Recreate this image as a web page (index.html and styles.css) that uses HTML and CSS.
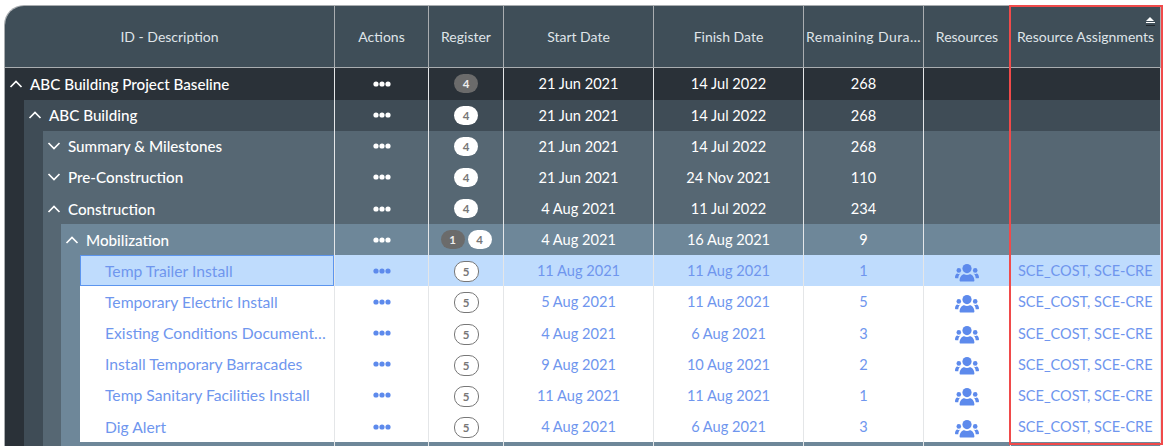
FILE: index.html
```html
<!DOCTYPE html>
<html lang="en">
<head>
    <meta charset="UTF-8">
    <meta name="viewport" content="width=device-width, initial-scale=1.0">
    <title>Schedule Grid</title>
    <link rel="stylesheet" href="styles.css">
</head>
<body>
    <svg class="defs" width="0" height="0">
        <symbol id="dots" viewBox="0 0 18 6">
            <circle cx="3" cy="3" r="2.6"/><circle cx="9" cy="3" r="2.6"/><circle cx="15" cy="3" r="2.6"/>
        </symbol>
        <symbol id="up" viewBox="0 0 14 8">
            <path d="M1.5 7 7 1.5 12.5 7" fill="none" stroke="currentColor" stroke-width="1.7"/>
        </symbol>
        <symbol id="down" viewBox="0 0 14 8">
            <path d="M1.5 1 7 6.5 12.5 1" fill="none" stroke="currentColor" stroke-width="1.7"/>
        </symbol>
        <symbol id="people" viewBox="0 0 24 18">
            <circle cx="12" cy="4.6" r="4.6"/>
            <path d="M5.6 17.5c-.6 0-1-.4-1-1 0-3.800 2.400-6.300 4.600-6.300.9.500 1.800.8 2.800.8s1.900-.3 2.800-.8c2.200 0 4.600 2.500 4.600 6.300 0 .6-.4 1-1 1z"/>
            <circle cx="3.800" cy="6.400" r="2.300"/><circle cx="20.200" cy="6.400" r="2.300"/>
            <path d="M3.300 14.300H1c-.6 0-1-.4-1-1 0-2.100 1-3.900 2.400-3.900.6.400 1.100.6 1.700.6.500 0 1-.1 1.400-.4-1.300 1-2.200 2.700-2.200 4.700zM20.700 14.300H23c.6 0 1-.4 1-1 0-2.100-1-3.900-2.400-3.900-.6.400-1.100.6-1.700.6-.5 0-1-.1-1.400-.4 1.300 1 2.200 2.700 2.200 4.700z"/>
        </symbol>
    </svg>

    <div class="grid">
        <div class="row head">
            <div class="cell">ID - Description</div>
            <div class="cell">Actions</div>
            <div class="cell">Register</div>
            <div class="cell">Start Date</div>
            <div class="cell">Finish Date</div>
            <div class="cell wide">Remaining Dura…</div>
            <div class="cell">Resources</div>
            <div class="cell sorted">Resource Assignments<span class="sort-arrow"></span></div>
        </div>

        <div class="row lvl1">
            <div class="cell desc"><svg class="chev"><use href="#up"/></svg><span class="label">ABC Building Project Baseline</span></div>
            <div class="cell"><svg class="dots"><use href="#dots"/></svg></div>
            <div class="cell"><span class="pill grey">4</span></div>
            <div class="cell">21 Jun 2021</div>
            <div class="cell">14 Jul 2022</div>
            <div class="cell">268</div>
            <div class="cell"></div>
            <div class="cell"></div>
        </div>

        <div class="row lvl2">
            <div class="cell desc"><i class="in1"></i><svg class="chev"><use href="#up"/></svg><span class="label">ABC Building</span></div>
            <div class="cell"><svg class="dots"><use href="#dots"/></svg></div>
            <div class="cell"><span class="pill">4</span></div>
            <div class="cell">21 Jun 2021</div>
            <div class="cell">14 Jul 2022</div>
            <div class="cell">268</div>
            <div class="cell"></div>
            <div class="cell"></div>
        </div>

        <div class="row lvl3">
            <div class="cell desc"><i class="in1"></i><i class="in2"></i><svg class="chev"><use href="#down"/></svg><span class="label">Summary &amp; Milestones</span></div>
            <div class="cell"><svg class="dots"><use href="#dots"/></svg></div>
            <div class="cell"><span class="pill">4</span></div>
            <div class="cell">21 Jun 2021</div>
            <div class="cell">14 Jul 2022</div>
            <div class="cell">268</div>
            <div class="cell"></div>
            <div class="cell"></div>
        </div>

        <div class="row lvl3">
            <div class="cell desc"><i class="in1"></i><i class="in2"></i><svg class="chev"><use href="#down"/></svg><span class="label">Pre-Construction</span></div>
            <div class="cell"><svg class="dots"><use href="#dots"/></svg></div>
            <div class="cell"><span class="pill">4</span></div>
            <div class="cell">21 Jun 2021</div>
            <div class="cell">24 Nov 2021</div>
            <div class="cell">110</div>
            <div class="cell"></div>
            <div class="cell"></div>
        </div>

        <div class="row lvl3">
            <div class="cell desc"><i class="in1"></i><i class="in2"></i><svg class="chev"><use href="#up"/></svg><span class="label">Construction</span></div>
            <div class="cell"><svg class="dots"><use href="#dots"/></svg></div>
            <div class="cell"><span class="pill">4</span></div>
            <div class="cell">4 Aug 2021</div>
            <div class="cell">11 Jul 2022</div>
            <div class="cell">234</div>
            <div class="cell"></div>
            <div class="cell"></div>
        </div>

        <div class="row lvl4">
            <div class="cell desc"><i class="in1"></i><i class="in2"></i><i class="in3"></i><svg class="chev"><use href="#up"/></svg><span class="label">Mobilization</span></div>
            <div class="cell"><svg class="dots"><use href="#dots"/></svg></div>
            <div class="cell"><span class="pill grey">1</span><span class="pill">4</span></div>
            <div class="cell">4 Aug 2021</div>
            <div class="cell">16 Aug 2021</div>
            <div class="cell">9</div>
            <div class="cell"></div>
            <div class="cell"></div>
        </div>

        <div class="row leaf selected">
            <div class="cell desc"><i class="in1"></i><i class="in2"></i><i class="in3"></i><i class="in4"></i><span class="name">Temp Trailer Install</span></div>
            <div class="cell"><svg class="dots"><use href="#dots"/></svg></div>
            <div class="cell"><span class="pill outline">5</span></div>
            <div class="cell">11 Aug 2021</div>
            <div class="cell">11 Aug 2021</div>
            <div class="cell">1</div>
            <div class="cell"><svg class="people"><use href="#people"/></svg></div>
            <div class="cell assign">SCE_COST, SCE-CRE</div>
        </div>

        <div class="row leaf">
            <div class="cell desc"><i class="in1"></i><i class="in2"></i><i class="in3"></i><i class="in4"></i><span class="name">Temporary Electric Install</span></div>
            <div class="cell"><svg class="dots"><use href="#dots"/></svg></div>
            <div class="cell"><span class="pill outline">5</span></div>
            <div class="cell">5 Aug 2021</div>
            <div class="cell">11 Aug 2021</div>
            <div class="cell">5</div>
            <div class="cell"><svg class="people"><use href="#people"/></svg></div>
            <div class="cell assign">SCE_COST, SCE-CRE</div>
        </div>

        <div class="row leaf">
            <div class="cell desc"><i class="in1"></i><i class="in2"></i><i class="in3"></i><i class="in4"></i><span class="name">Existing Conditions Document…</span></div>
            <div class="cell"><svg class="dots"><use href="#dots"/></svg></div>
            <div class="cell"><span class="pill outline">5</span></div>
            <div class="cell">4 Aug 2021</div>
            <div class="cell">6 Aug 2021</div>
            <div class="cell">3</div>
            <div class="cell"><svg class="people"><use href="#people"/></svg></div>
            <div class="cell assign">SCE_COST, SCE-CRE</div>
        </div>

        <div class="row leaf">
            <div class="cell desc"><i class="in1"></i><i class="in2"></i><i class="in3"></i><i class="in4"></i><span class="name">Install Temporary Barracades</span></div>
            <div class="cell"><svg class="dots"><use href="#dots"/></svg></div>
            <div class="cell"><span class="pill outline">5</span></div>
            <div class="cell">9 Aug 2021</div>
            <div class="cell">10 Aug 2021</div>
            <div class="cell">2</div>
            <div class="cell"><svg class="people"><use href="#people"/></svg></div>
            <div class="cell assign">SCE_COST, SCE-CRE</div>
        </div>

        <div class="row leaf">
            <div class="cell desc"><i class="in1"></i><i class="in2"></i><i class="in3"></i><i class="in4"></i><span class="name">Temp Sanitary Facilities Install</span></div>
            <div class="cell"><svg class="dots"><use href="#dots"/></svg></div>
            <div class="cell"><span class="pill outline">5</span></div>
            <div class="cell">11 Aug 2021</div>
            <div class="cell">11 Aug 2021</div>
            <div class="cell">1</div>
            <div class="cell"><svg class="people"><use href="#people"/></svg></div>
            <div class="cell assign">SCE_COST, SCE-CRE</div>
        </div>

        <div class="row leaf">
            <div class="cell desc"><i class="in1"></i><i class="in2"></i><i class="in3"></i><i class="in4"></i><span class="name">Dig Alert</span></div>
            <div class="cell"><svg class="dots"><use href="#dots"/></svg></div>
            <div class="cell"><span class="pill outline">5</span></div>
            <div class="cell">4 Aug 2021</div>
            <div class="cell">6 Aug 2021</div>
            <div class="cell">3</div>
            <div class="cell"><svg class="people"><use href="#people"/></svg></div>
            <div class="cell assign">SCE_COST, SCE-CRE</div>
        </div>

        <div class="row tail">
            <div class="cell desc"><i class="in1"></i><i class="in2"></i><i class="in3"></i></div>
            <div class="cell"></div>
            <div class="cell"></div>
            <div class="cell"></div>
            <div class="cell"></div>
            <div class="cell"></div>
            <div class="cell"></div>
            <div class="cell"></div>
        </div>
    </div>

    <div class="highlight"></div>
</body>
</html>
```

FILE: styles.css
```css
html, body {
    height: 100%;
    overflow: hidden;
}
body {
    margin: 0;
    padding: 5px 0 0 4px;
    box-sizing: border-box;
    position: relative;
    background: #fff;
    font-family: Lato, "Noto Sans", Arial, sans-serif;
    font-size: 14.6px;
}
.defs {
    position: absolute;
}
.grid {
    width: 1157px;
    border-top-left-radius: 20px;
    overflow: hidden;
    border-left: 1px solid #a9adb0;
    border-top: 1px solid #a9adb0;
    box-sizing: border-box;
}
.row {
    display: grid;
    grid-template-columns: 330px 94px 75px 150px 150px 120px 87px 150px;
    height: 31.15px;
    color: #fff;
}
.cell {
    display: flex;
    align-items: center;
    justify-content: center;
    gap: 3px;
    min-width: 0;
    box-sizing: border-box;
    border-right: 1px solid #e4e6e8;
    white-space: nowrap;
}

/* header */
.head {
    height: 61.4px;
    background: #3f4e58;
    color: #dfe4e8;
    font-size: 14px;
    border-bottom: 1px solid #a9adb0;
    box-sizing: content-box;
}
.head .cell {
    border-right-color: #a9adb0;
    padding: 0 1px 1px;
}
.head .wide {
    letter-spacing: .45px;
}
.sorted {
    position: relative;
}
.sort-arrow {
    position: absolute;
    top: 11px;
    right: 5px;
    width: 9px;
    height: 8px;
    border-bottom: 1px solid #22292f;
    background: linear-gradient(#fff, #fff) bottom 2px left 0 / 9px 1px no-repeat;
}
.sort-arrow::before {
    content: "";
    position: absolute;
    top: 0;
    left: 0;
    border-left: 4.5px solid transparent;
    border-right: 4.5px solid transparent;
    border-bottom: 4px solid #fff;
}

/* tree levels */
.lvl1 { background: #2a3138; }
.lvl2 { background: #3f4c56; }
.lvl3 { background: #566773; }
.lvl4 { background: #6e8799; }
.tail { background: #6e8799; height: 5px; }
.leaf { background: #fff; color: #6f96ee; }
.selected { background: #bfdcfd; }

.desc {
    justify-content: flex-start;
    align-items: stretch;
    gap: 0;
}
.desc i {
    flex: none;
    width: 19px;
}
.desc .in3 { width: 18px; }
.in1 { background: #2a3138; }
.in2 { background: #3f4c56; }
.in3 { background: #566773; }
.in4 { background: #6e8799; }
.chev {
    flex: none;
    width: 14px;
    height: 8px;
    margin: 0 7px 0 4px;
    align-self: center;
    color: #fff;
}
.label {
    align-self: center;
    font-size: 15.2px;
    font-weight: 500;
}
.name {
    flex: 1;
    display: flex;
    align-items: center;
    padding-left: 25px;
    font-size: 15.7px;
    background: #fff;
}
.selected .name {
    background: #bfdcfd;
    box-shadow: inset 0 0 0 1px #5c95ee;
}

/* action dots, badges, icons */
.dots {
    width: 18px;
    height: 6px;
    fill: #fff;
}
.leaf .dots {
    fill: #5d8aec;
}
.pill {
    display: inline-block;
    width: 24px;
    height: 19px;
    line-height: 19px;
    border-radius: 10px;
    background: #fff;
    color: #777;
    font-size: 11.5px;
    font-weight: 700;
    text-align: center;
}
.pill.grey {
    background: #6b6b6b;
    color: #eee;
}
.pill.outline {
    width: 25px;
    height: 21px;
    line-height: 19px;
    border: 1px solid #777;
    box-sizing: border-box;
    margin-top: 2px;
}
.people {
    width: 24px;
    height: 18px;
    fill: #5d8aec;
    margin-top: 4px;
}
.assign {
    justify-content: flex-start;
    padding-left: 7px;
    font-size: 14.5px;
}

/* red marker around the last column */
.highlight {
    position: absolute;
    left: 1009px;
    top: 5px;
    width: 154px;
    height: 440px;
    box-sizing: border-box;
    border: 2px solid #f04a4a;
}
```
